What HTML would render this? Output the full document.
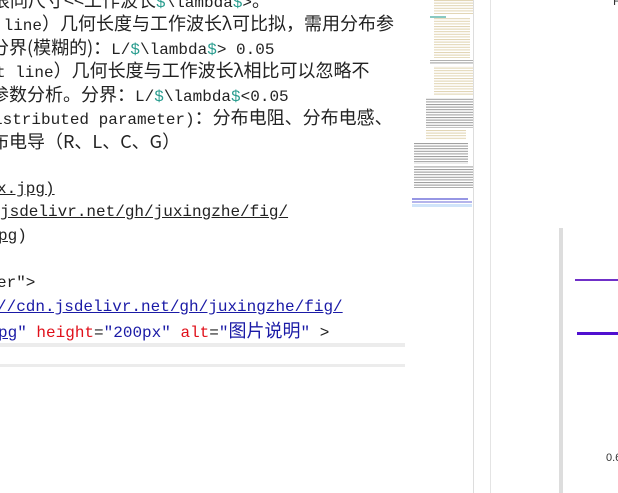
<html><head><style>
body{margin:0;width:618px;height:493px;overflow:hidden;background:#fff;position:relative;font-family:"Liberation Mono","Noto Sans CJK SC",monospace;font-size:16px;color:#222;}
.l{position:absolute;white-space:pre;height:24px;line-height:24px;}
.c{font-family:"Noto Sans CJK SC",sans-serif;font-size:18px;}
.g{color:#2a9d8f}
.u{text-decoration:underline}
.b{color:#1a1aa6}
.r{color:#e0101a}
#ed{position:absolute;left:0;top:0;width:405px;height:493px;overflow:hidden;}
</style></head><body>
<div id="ed">
<div class="l" style="top:-12px;left:-8px"><span class="c">很同尺寸&lt;&lt;工作波长</span><span class="g">$</span>\lambda<span class="g">$</span>&gt;<span class="c">。</span></div>
<div class="l" style="top:11px;left:-6px"> line<span class="c">）几何长度与工作波长λ可比拟，需用分布参</span></div>
<div class="l" style="top:35px;left:-9px"><span class="c">分界(模糊的)：</span>L/<span class="g">$</span>\lambda<span class="g">$</span>&gt; 0.05</div>
<div class="l" style="top:58px;left:-4px">t line<span class="c">）几何长度与工作波长λ相比可以忽略不</span></div>
<div class="l" style="top:82px;left:-9px"><span class="c">参数分析。分界：</span>L/<span class="g">$</span>\lambda<span class="g">$</span>&lt;0.05</div>
<div class="l" style="top:105px;left:-7px">istributed parameter)<span class="c">：分布电阻、分布电感、</span></div>
<div class="l" style="top:129px;left:-9px"><span class="c">布电导（R、L、C、G）</span></div>
<div class="l u" style="top:177px;left:-3px">x.jpg)</div>
<div class="l u" style="top:200px;left:0px">jsdelivr.net/gh/juxingzhe/fig/</div>
<div class="l" style="top:224px;left:-2px"><span class="u">pg</span>)</div>
<div class="l" style="top:271px;left:-3px">er"&gt;</div>
<div class="l b u" style="top:295px;left:-3px">//cdn.jsdelivr.net/gh/juxingzhe/fig/</div>
<div class="l" style="top:318px;left:-2px"><span class="b u">pg</span><span class="b">"</span> <span class="r">height</span>=<span class="b">"200px"</span> <span class="r">alt</span>=<span class="b">"<span class="c">图片说明</span>"</span> &gt;</div>
<div style="position:absolute;left:0;top:343px;width:405px;height:4px;background:#ececec"></div>
<div style="position:absolute;left:0;top:364px;width:405px;height:3px;background:#ececec"></div>
</div>
<!-- minimap -->
<svg style="position:absolute;left:410px;top:0" width="64" height="210">
<defs>
<pattern id="p1" width="64" height="2.6" patternUnits="userSpaceOnUse"><rect width="64" height="1" fill="#c8b070"/></pattern>
<pattern id="p2" width="64" height="2.6" patternUnits="userSpaceOnUse"><rect width="64" height="1" fill="#444"/></pattern>
</defs>
<g opacity=".55">
<rect x="24" y="0" width="46" height="14" fill="url(#p1)"/>
<rect x="20" y="16" width="16" height="2" fill="#2a9d8f"/>
<rect x="24" y="18" width="36" height="40" fill="url(#p1)"/>
<rect x="20" y="60" width="44" height="4" fill="url(#p2)"/>
<rect x="24" y="66" width="40" height="30" fill="url(#p1)"/>
<rect x="16" y="98" width="52" height="30" fill="url(#p2)"/>
<rect x="16" y="130" width="40" height="10" fill="url(#p1)"/>
<rect x="4" y="142" width="54" height="22" fill="url(#p2)"/>
<rect x="4" y="166" width="60" height="22" fill="url(#p2)"/>
</g>
<rect x="2" y="198" width="56" height="2" fill="#6a6ad8" opacity=".7"/>
<rect x="2" y="201" width="60" height="2" fill="#6a6ad8" opacity=".5"/>
<rect x="2" y="204" width="60" height="3" fill="#d0e4fa"/>
</svg>
<div style="position:absolute;left:473px;top:0;width:1px;height:493px;background:#ddd"></div>
<div style="position:absolute;left:490px;top:0;width:1px;height:493px;background:#e4e4e4"></div>
<div style="position:absolute;left:613px;top:-6px;font-family:'Liberation Sans',sans-serif;font-size:12px;color:#333">F</div>
<div style="position:absolute;left:559px;top:228px;width:4px;height:265px;background:#ddd"></div>
<div style="position:absolute;left:575px;top:279px;width:43px;height:2px;background:#7030c8"></div>
<div style="position:absolute;left:577px;top:332px;width:41px;height:3px;background:#5010d0"></div>
<div style="position:absolute;left:606px;top:452px;font-family:'Liberation Sans',sans-serif;font-size:11px;color:#333">0.6</div>
</body></html>
